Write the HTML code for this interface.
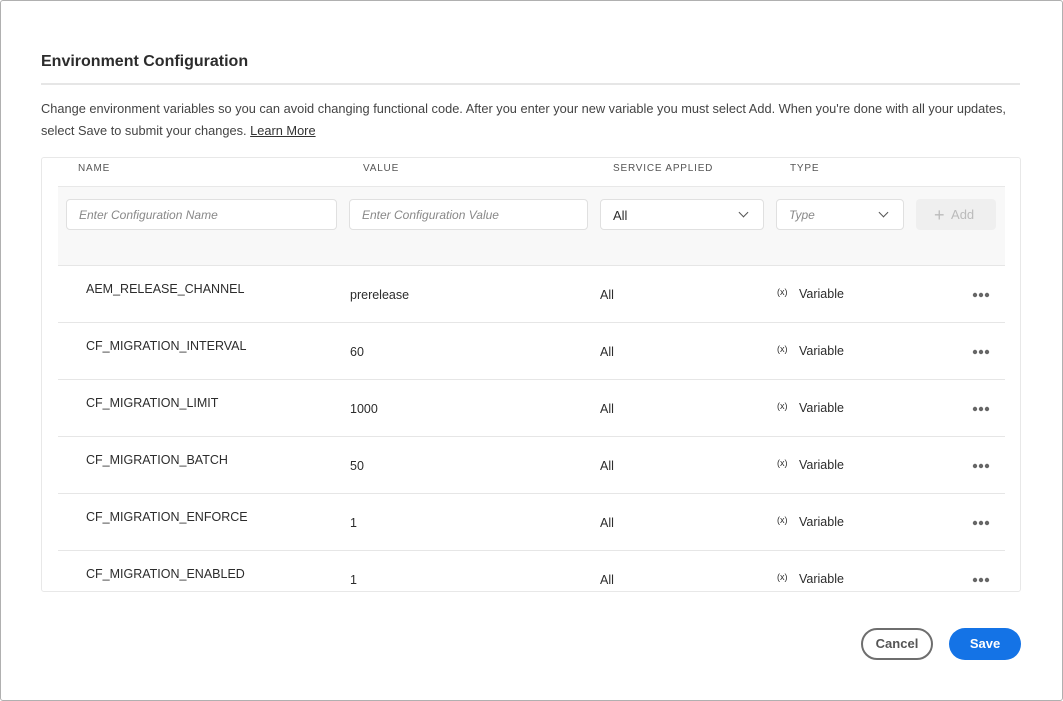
<!DOCTYPE html>
<html><head><style>
*{box-sizing:border-box;margin:0;padding:0}
body{width:1063px;height:701px;background:#fff;font-family:"Liberation Sans",sans-serif;color:#2c2c2c;position:relative;overflow:hidden}
.frame{position:absolute;left:0;top:0;width:1063px;height:701px;border:1px solid #b0b0b0;border-radius:3px}
.abs{position:absolute;white-space:nowrap}
h1{position:absolute;left:41px;top:53px;font-size:16px;font-weight:bold;color:#2c2c2c}
.rule{position:absolute;left:41px;top:83px;width:979px;height:2px;background:#e6e6e6}
.desc{position:absolute;left:41px;top:98px;font-size:12.8px;line-height:22px;color:#444}
.desc u{color:#333}
.tbl{position:absolute;left:41px;top:157px;width:980px;height:435px;border:1px solid #e8e8e8;border-radius:3px;overflow:hidden}
.hd{font-size:10px;letter-spacing:0.8px;color:#555;top:5px}
.inp{position:absolute;left:16px;top:28px;width:947px;height:80px;background:#f8f8f8;border-top:1px solid #e8e8e8;border-bottom:1px solid #e6e6e6}
.box{position:absolute;top:12px;height:31px;background:#fff;border:1px solid #e0e0e0;border-radius:4px;font-size:12px;padding:8px 12px;color:#888;font-style:italic}
.chev{position:absolute;right:16px;top:9px;width:7px;height:7px;border-right:1.5px solid #555;border-bottom:1.5px solid #555;transform:rotate(45deg)}
.row{position:absolute;left:16px;width:947px;height:57px;border-bottom:1px solid #e6e6e6;font-size:12.5px;color:#2c2c2c}
.row span,.row svg{position:absolute;white-space:nowrap}
.btn{position:absolute;top:628px;height:32px;border-radius:16px;font-size:13px;font-weight:bold;text-align:center;line-height:28px}
</style></head><body>
<div class="frame"></div>
<h1>Environment Configuration</h1>
<div class="rule"></div>
<div class="desc">Change environment variables so you can avoid changing functional code. After you enter your new variable you must select Add. When you're done with all your updates,<br>select Save to submit your changes. <u>Learn More</u></div>
<div class="tbl">
 <span class="abs hd" style="left:36px">NAME</span>
 <span class="abs hd" style="left:321px">VALUE</span>
 <span class="abs hd" style="left:571px">SERVICE APPLIED</span>
 <span class="abs hd" style="left:748px">TYPE</span>
 <div class="inp">
  <div class="box" style="left:8px;width:271px">Enter Configuration Name</div>
  <div class="box" style="left:291px;width:239px">Enter Configuration Value</div>
  <div class="box" style="left:542px;width:164px;font-style:normal;color:#2c2c2c;font-size:13px">All<div class="chev"></div></div>
  <div class="box" style="left:718px;width:128px">Type<div class="chev"></div></div>
  <div style="position:absolute;left:858px;top:12px;width:80px;height:31px;background:#efefef;border-radius:4px;color:#bbb;font-size:13px;padding:6px 0 0 18px"><span style="font-size:18px;vertical-align:-2px">+</span>&nbsp; Add</div>
 </div>
 <div class="row" style="top:108px"><span style="left:28px;top:16px">AEM_RELEASE_CHANNEL</span><span style="left:292px;top:22px">prerelease</span><span style="left:542px;top:22px">All</span><span style="left:719px;top:21px;font-size:9px">(x)</span><span style="left:741px;top:21px">Variable</span><svg style="left:914px;top:26px" width="20" height="6"><circle cx="3" cy="3" r="2.2" fill="#666"/><circle cx="9" cy="3" r="2.2" fill="#666"/><circle cx="15" cy="3" r="2.2" fill="#666"/></svg></div>
 <div class="row" style="top:165px"><span style="left:28px;top:16px">CF_MIGRATION_INTERVAL</span><span style="left:292px;top:22px">60</span><span style="left:542px;top:22px">All</span><span style="left:719px;top:21px;font-size:9px">(x)</span><span style="left:741px;top:21px">Variable</span><svg style="left:914px;top:26px" width="20" height="6"><circle cx="3" cy="3" r="2.2" fill="#666"/><circle cx="9" cy="3" r="2.2" fill="#666"/><circle cx="15" cy="3" r="2.2" fill="#666"/></svg></div>
 <div class="row" style="top:222px"><span style="left:28px;top:16px">CF_MIGRATION_LIMIT</span><span style="left:292px;top:22px">1000</span><span style="left:542px;top:22px">All</span><span style="left:719px;top:21px;font-size:9px">(x)</span><span style="left:741px;top:21px">Variable</span><svg style="left:914px;top:26px" width="20" height="6"><circle cx="3" cy="3" r="2.2" fill="#666"/><circle cx="9" cy="3" r="2.2" fill="#666"/><circle cx="15" cy="3" r="2.2" fill="#666"/></svg></div>
 <div class="row" style="top:279px"><span style="left:28px;top:16px">CF_MIGRATION_BATCH</span><span style="left:292px;top:22px">50</span><span style="left:542px;top:22px">All</span><span style="left:719px;top:21px;font-size:9px">(x)</span><span style="left:741px;top:21px">Variable</span><svg style="left:914px;top:26px" width="20" height="6"><circle cx="3" cy="3" r="2.2" fill="#666"/><circle cx="9" cy="3" r="2.2" fill="#666"/><circle cx="15" cy="3" r="2.2" fill="#666"/></svg></div>
 <div class="row" style="top:336px"><span style="left:28px;top:16px">CF_MIGRATION_ENFORCE</span><span style="left:292px;top:22px">1</span><span style="left:542px;top:22px">All</span><span style="left:719px;top:21px;font-size:9px">(x)</span><span style="left:741px;top:21px">Variable</span><svg style="left:914px;top:26px" width="20" height="6"><circle cx="3" cy="3" r="2.2" fill="#666"/><circle cx="9" cy="3" r="2.2" fill="#666"/><circle cx="15" cy="3" r="2.2" fill="#666"/></svg></div>
 <div class="row" style="top:393px;border:none"><span style="left:28px;top:16px">CF_MIGRATION_ENABLED</span><span style="left:292px;top:22px">1</span><span style="left:542px;top:22px">All</span><span style="left:719px;top:21px;font-size:9px">(x)</span><span style="left:741px;top:21px">Variable</span><svg style="left:914px;top:26px" width="20" height="6"><circle cx="3" cy="3" r="2.2" fill="#666"/><circle cx="9" cy="3" r="2.2" fill="#666"/><circle cx="15" cy="3" r="2.2" fill="#666"/></svg></div>
</div>
<div class="btn" style="left:861px;width:72px;border:2px solid #6e6e6e;color:#555">Cancel</div>
<div class="btn" style="left:949px;width:72px;background:#1473e6;color:#fff;line-height:32px">Save</div>
</body></html>
